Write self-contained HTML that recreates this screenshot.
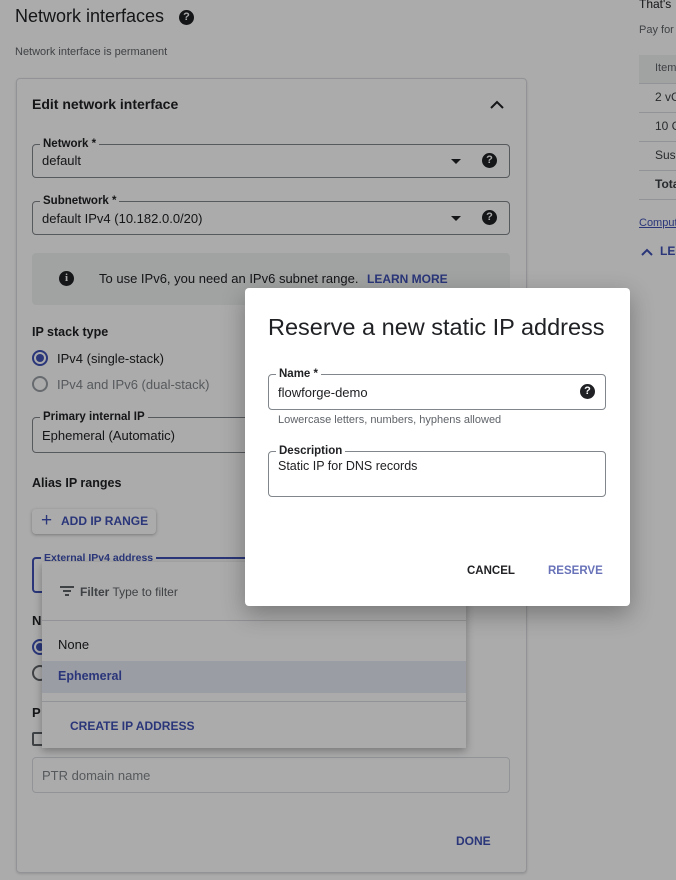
<!DOCTYPE html>
<html><head><meta charset="utf-8"><style>
*{box-sizing:border-box;margin:0;padding:0}
body{width:676px;height:880px;overflow:hidden;background:#fff;font-family:"Liberation Sans",Arial,sans-serif;color:#202124;position:relative}
.a{position:absolute;white-space:nowrap}
.fld{position:absolute;border:1px solid #80868b;border-radius:4px}
.lbl{position:absolute;top:-8px;left:7px;background:#fff;padding:0 3px;font-size:11.5px;font-weight:bold;color:#202124;line-height:14px}
.val{position:absolute;left:9px;font-size:13px}
.help{position:absolute;width:15px;height:15px;border-radius:50%;background:#202124;color:#fff;font-size:11px;font-weight:bold;text-align:center;line-height:15px}
.tri{position:absolute;width:0;height:0;border-left:5px solid transparent;border-right:5px solid transparent;border-top:5px solid #202124}
.blue{color:#3f51b5}
.scrim{position:absolute;left:0;top:0;width:676px;height:880px;background:rgba(0,0,0,0.33)}
</style></head><body>
<div class="a" style="left:15px;top:6px;font-size:18px">Network interfaces</div>
<div class="help" style="left:179px;top:10px">?</div>
<div class="a" style="left:15px;top:46px;font-size:11px;color:#5f6368">Network interface is permanent</div>

<div class="a" style="left:16px;top:78px;width:511px;height:795px;border:1px solid #dadce0;border-radius:4px;box-shadow:0 1px 2px rgba(0,0,0,.15)"></div>
<div class="a" style="left:32px;top:96px;font-size:14px;font-weight:bold">Edit network interface</div>
<svg class="a" style="left:490px;top:100px" width="14" height="10"><path d="M1 8 L7 2 L13 8" stroke="#202124" stroke-width="2" fill="none"/></svg>

<div class="fld" style="left:32px;top:144px;width:478px;height:34px"><div class="lbl">Network *</div><div class="val" style="top:8px">default</div><div class="tri" style="left:418px;top:14px"></div><div class="help" style="left:449px;top:8px">?</div></div>
<div class="fld" style="left:32px;top:201px;width:478px;height:34px"><div class="lbl">Subnetwork *</div><div class="val" style="top:9px">default IPv4 (10.182.0.0/20)</div><div class="tri" style="left:418px;top:14px"></div><div class="help" style="left:449px;top:8px">?</div></div>

<div class="a" style="left:32px;top:253px;width:478px;height:52px;background:#f1f3f4;border-radius:4px"></div>
<div class="help" style="left:59px;top:271px;font-family:'Liberation Serif',serif">i</div>
<div class="a" style="left:99px;top:271px;font-size:13px">To use IPv6, you need an IPv6 subnet range.</div>
<div class="a blue" style="left:367px;top:272px;font-size:12px;font-weight:bold">LEARN MORE</div>

<div class="a" style="left:32px;top:325px;font-size:12.5px;font-weight:bold">IP stack type</div>
<div class="a" style="left:32px;top:350px;width:16px;height:16px;border:2px solid #3f51b5;border-radius:50%"><div style="margin:2px;width:8px;height:8px;border-radius:50%;background:#3f51b5"></div></div>
<div class="a" style="left:57px;top:351px;font-size:13px">IPv4 (single-stack)</div>
<div class="a" style="left:32px;top:376px;width:16px;height:16px;border:2px solid #9aa0a6;border-radius:50%"></div>
<div class="a" style="left:57px;top:377px;font-size:13px;color:#80868b">IPv4 and IPv6 (dual-stack)</div>

<div class="fld" style="left:32px;top:417px;width:478px;height:36px"><div class="lbl">Primary internal IP</div><div class="val" style="top:10px">Ephemeral (Automatic)</div></div>

<div class="a" style="left:32px;top:476px;font-size:12.5px;font-weight:bold">Alias IP ranges</div>
<div class="a blue" style="left:32px;top:509px;width:124px;height:25px;border-radius:4px;box-shadow:0 1px 3px rgba(0,0,0,.3);font-size:12px;font-weight:bold;line-height:25px;padding-left:29px">ADD IP RANGE</div>
<div class="a blue" style="left:41px;top:511px;font-size:19px;line-height:20px">+</div>

<div class="fld" style="left:32px;top:557px;width:478px;height:36px;border:2px solid #3f51b5"><div class="lbl blue" style="color:#3f51b5;font-size:10.5px">External IPv4 address</div></div>
<div class="a" style="left:32px;top:613px;font-size:13px;font-weight:bold">N</div>
<div class="a" style="left:32px;top:639px;width:16px;height:16px;border:2px solid #3f51b5;border-radius:50%"><div style="margin:2px;width:8px;height:8px;border-radius:50%;background:#3f51b5"></div></div>
<div class="a" style="left:32px;top:665px;width:16px;height:16px;border:2px solid #5f6368;border-radius:50%"></div>
<div class="a" style="left:32px;top:705px;font-size:13px;font-weight:bold">P</div>
<div class="a" style="left:32px;top:732px;width:14px;height:14px;border:2px solid #5f6368;border-radius:2px"></div>

<div class="fld" style="left:32px;top:757px;width:478px;height:36px;border-color:#dadce0"><div class="val" style="top:10px;color:#80868b">PTR domain name</div></div>
<div class="a blue" style="left:456px;top:834px;font-size:12px;font-weight:bold">DONE</div>

<div class="a" style="left:42px;top:562px;width:424px;height:186px;background:#fff;box-shadow:0 3px 8px rgba(0,0,0,.3)">
  <svg class="a" style="left:18px;top:24px" width="14" height="11"><path d="M0 1H14M3 5H11M5 9H9" stroke="#5f6368" stroke-width="2"/></svg>
  <div class="a" style="left:38px;top:23px;font-size:12px;color:#5f6368"><b>Filter</b> Type to filter</div>
  <div class="a" style="left:0;top:58px;width:424px;border-top:1px solid #dadce0"></div>
  <div class="a" style="left:16px;top:75px;font-size:13px">None</div>
  <div class="a" style="left:0;top:99px;width:424px;height:32px;background:#e8eaf6"></div>
  <div class="a blue" style="left:16px;top:107px;font-size:12.5px;font-weight:bold">Ephemeral</div>
  <div class="a" style="left:0;top:139px;width:424px;border-top:1px solid #dadce0"></div>
  <div class="a blue" style="left:28px;top:157px;font-size:12px;font-weight:bold">CREATE IP ADDRESS</div>
</div>

<div class="a" style="left:639px;top:-3px;font-size:12px">That's</div>
<div class="a" style="left:639px;top:24px;font-size:11px;color:#5f6368">Pay for</div>
<div class="a" style="left:639px;top:55px;width:40px;height:28px;background:#f1f3f4"></div>
<div class="a" style="left:655px;top:62px;font-size:11px;color:#5f6368">Item</div>
<div class="a" style="left:655px;top:90px;font-size:12px;color:#3c4043">2 vC</div>
<div class="a" style="left:655px;top:119px;font-size:12px;color:#3c4043">10 G</div>
<div class="a" style="left:655px;top:148px;font-size:12px;color:#3c4043">Sus</div>
<div class="a" style="left:655px;top:177px;font-size:12px;font-weight:bold;color:#3c4043">Total</div>
<div class="a" style="left:639px;top:83px;width:40px;border-top:1px solid #dadce0"></div>
<div class="a" style="left:639px;top:112px;width:40px;border-top:1px solid #dadce0"></div>
<div class="a" style="left:639px;top:141px;width:40px;border-top:1px solid #dadce0"></div>
<div class="a" style="left:639px;top:170px;width:40px;border-top:1px solid #dadce0"></div>
<div class="a" style="left:639px;top:199px;width:40px;border-top:1px solid #dadce0"></div>
<div class="a blue" style="left:639px;top:217px;font-size:11px;text-decoration:underline">Compute</div>
<svg class="a" style="left:641px;top:248px" width="12" height="8"><path d="M1 7L6 2L11 7" stroke="#3f51b5" stroke-width="2" fill="none"/></svg>
<div class="a blue" style="left:660px;top:244px;font-size:12px;font-weight:bold">LESS</div>

<div class="scrim"></div>

<div class="a" style="left:245px;top:288px;width:385px;height:318px;background:#fff;border-radius:4px;box-shadow:0 8px 24px rgba(0,0,0,.3)">
  <div class="a" style="left:23px;top:26px;font-size:23.5px;color:#202124">Reserve a new static IP address</div>
  <div class="fld" style="left:23px;top:86px;width:338px;height:36px"><div class="lbl">Name *</div><div class="val" style="top:10px">flowforge-demo</div><div class="help" style="left:311px;top:9px">?</div></div>
  <div class="a" style="left:33px;top:126px;font-size:11px;color:#5f6368">Lowercase letters, numbers, hyphens allowed</div>
  <div class="fld" style="left:23px;top:163px;width:338px;height:46px"><div class="lbl">Description</div><div class="val" style="top:7px;font-size:12.5px">Static IP for DNS records</div></div>
  <div class="a" style="left:222px;top:277px;font-size:11.5px;font-weight:bold">CANCEL</div>
  <div class="a" style="left:303px;top:277px;font-size:11.5px;font-weight:bold;color:#6872b8">RESERVE</div>
</div>
</body></html>
